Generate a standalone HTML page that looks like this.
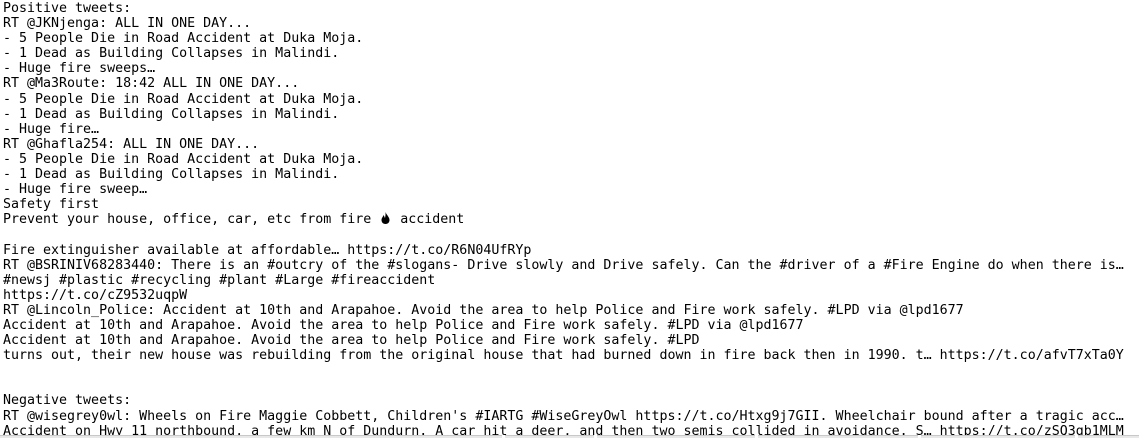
<!DOCTYPE html>
<html><head><meta charset="utf-8"><style>
html,body{margin:0;padding:0;background:#fff;width:1139px;height:438px;overflow:hidden;position:relative}
pre{margin:0;position:absolute;left:3px;top:1px;font-family:"DejaVu Sans Mono","Liberation Mono",monospace;font-size:13.3px;line-height:15.1px;color:#000;white-space:pre}
.bar{position:absolute;left:0;top:435px;width:1139px;height:3px;background:#e8e8e8;border-top:1px solid #c8c8c8}
.sep{position:absolute;top:435px;width:3px;height:3px;background:#fff}
.fi{display:inline-block;width:13px;height:12px;vertical-align:-1px}
</style></head><body>
<pre>Positive tweets:
RT @JKNjenga: ALL IN ONE DAY...
- 5 People Die in Road Accident at Duka Moja.
- 1 Dead as Building Collapses in Malindi.
- Huge fire sweeps…
RT @Ma3Route: 18:42 ALL IN ONE DAY...
- 5 People Die in Road Accident at Duka Moja.
- 1 Dead as Building Collapses in Malindi.
- Huge fire…
RT @Ghafla254: ALL IN ONE DAY...
- 5 People Die in Road Accident at Duka Moja.
- 1 Dead as Building Collapses in Malindi.
- Huge fire sweep…
Safety first
Prevent your house, office, car, etc from fire <svg class="fi" viewBox="0 0 13 12"><path d="M6.5 0 C7.5 3 10.5 5 10.5 8 C10.5 10.5 8.7 12 6.5 12 C4.3 12 2.5 10.5 2.5 8 C2.5 6 4 5 4.5 3 C5.5 4.5 5.5 5.5 6 6 C6.5 4 6.7 2 6.5 0Z" fill="#000"/></svg> accident

Fire extinguisher available at affordable… https://t.co/R6N04UfRYp
RT @BSRINIV68283440: There is an #outcry of the #slogans- Drive slowly and Drive safely. Can the #driver of a #Fire Engine do when there is…
#newsj #plastic #recycling #plant #Large #fireaccident
https://t.co/cZ9532uqpW
RT @Lincoln_Police: Accident at 10th and Arapahoe. Avoid the area to help Police and Fire work safely. #LPD via @lpd1677
Accident at 10th and Arapahoe. Avoid the area to help Police and Fire work safely. #LPD via @lpd1677
Accident at 10th and Arapahoe. Avoid the area to help Police and Fire work safely. #LPD
turns out, their new house was rebuilding from the original house that had burned down in fire back then in 1990. t… https://t.co/afvT7xTa0Y


Negative tweets:
RT @wisegrey0wl: Wheels on Fire Maggie Cobbett, Children's #IARTG #WiseGreyOwl https://t.co/Htxg9j7GII. Wheelchair bound after a tragic acc…
Accident on Hwy 11 northbound, a few km N of Dundurn. A car hit a deer, and then two semis collided in avoidance. S… https://t.co/zSQ3gb1MLM</pre>
<div class="bar"></div>
<div class="sep" style="left:502px"></div>
<div class="sep" style="left:594px"></div>
<div class="sep" style="left:755px"></div>
<div class="sep" style="left:918px"></div>
<div class="sep" style="left:1075px"></div>
</body></html>
